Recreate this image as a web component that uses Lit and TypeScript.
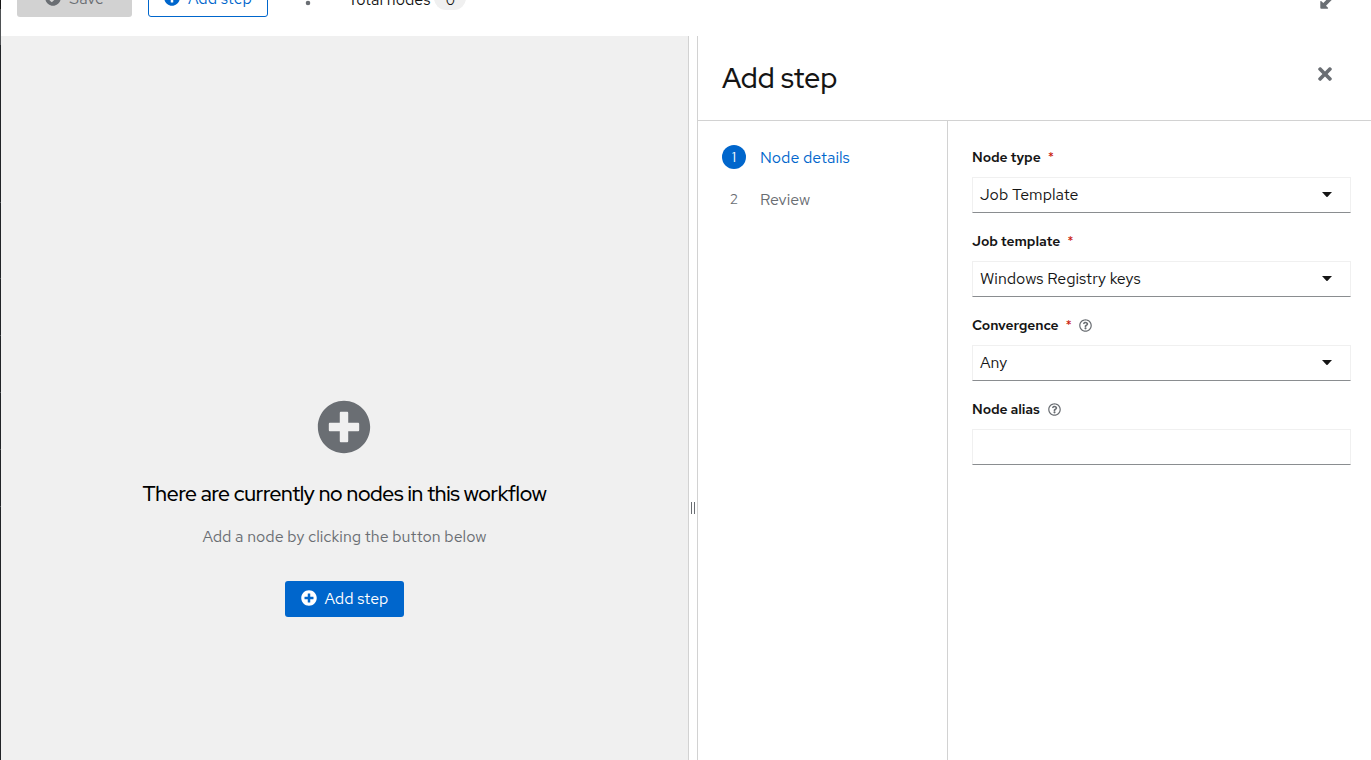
import { LitElement, html, css, svg, nothing } from "lit";
import { customElement, property } from "lit/decorators.js";

const ICONS: Record<string, { box: string; d: string }> = {
  plus: {
    box: "0 0 512 512",
    d: "M256 8C119 8 8 119 8 256s111 248 248 248 248-111 248-248S393 8 256 8zm144 276c0 6.600-5.400 12-12 12h-92v92c0 6.600-5.400 12-12 12h-56c-6.600 0-12-5.400-12-12v-92h-92c-6.600 0-12-5.400-12-12v-56c0-6.600 5.400-12 12-12h92v-92c0-6.600 5.400-12 12-12h56c6.600 0 12 5.400 12 12v92h92c6.600 0 12 5.400 12 12v56z",
  },
  check: {
    box: "0 0 512 512",
    d: "M504 256c0 136.967-111.033 248-248 248S8 392.967 8 256 119.033 8 256 8s248 111.033 248 248zM227.314 387.314l184-184c6.248-6.248 6.248-16.379 0-22.627l-22.627-22.627c-6.248-6.249-16.379-6.249-22.628 0L216 308.118l-70.059-70.059c-6.248-6.248-16.379-6.248-22.628 0l-22.627 22.627c-6.248 6.248-6.248 16.379 0 22.627l104 104c6.249 6.249 16.379 6.249 22.628.001z",
  },
  help: {
    box: "0 0 512 512",
    d: "M256 8C119.043 8 8 119.083 8 256c0 136.997 111.043 248 248 248s248-111.003 248-248C504 119.083 392.957 8 256 8zm0 448c-110.532 0-200-89.431-200-200 0-110.495 89.472-200 200-200 110.491 0 200 89.471 200 200 0 110.53-89.431 200-200 200zm107.244-255.2c0 67.052-72.421 68.084-72.421 92.863V300c0 6.627-5.373 12-12 12h-45.647c-6.627 0-12-5.373-12-12v-8.659c0-35.745 27.1-50.034 47.579-61.516 17.561-9.845 28.324-16.541 28.324-29.579 0-17.246-21.999-28.693-39.784-28.693-23.189 0-33.894 10.977-48.942 29.969-4.057 5.12-11.46 6.071-16.666 2.124l-27.824-21.098c-5.107-3.872-6.251-11.066-2.644-16.363C184.846 131.491 214.94 112 261.794 112c49.071 0 101.45 38.304 101.45 88.8zM298 368c0 23.159-18.841 42-42 42s-42-18.841-42-42 18.841-42 42-42 42 18.841 42 42z",
  },
  times: {
    box: "0 0 352 512",
    d: "M242.72 256l100.07-100.07c12.28-12.28 12.28-32.19 0-44.48l-22.24-22.24c-12.28-12.28-32.19-12.28-44.48 0L176 189.28 75.93 89.21c-12.28-12.28-32.19-12.28-44.48 0L9.21 111.45c-12.28 12.28-12.28 32.19 0 44.48L109.28 256 9.21 356.07c-12.28 12.28-12.28 32.19 0 44.48l22.24 22.24c12.28 12.28 32.2 12.28 44.48 0L176 322.72l100.07 100.07c12.28 12.28 32.2 12.28 44.48 0l22.24-22.24c12.28-12.28 12.28-32.19 0-44.48L242.72 256z",
  },
  caret: { box: "0 0 10 5", d: "M0 0h10L5.600 4.700q-.6.500-1.200 0z" },
  kebab: {
    box: "0 0 6 20",
    d: "M3 .7a2.300 2.300 0 1 1 0 4.600 2.300 2.300 0 0 1 0-4.600zm0 7a2.300 2.300 0 1 1 0 4.600 2.300 2.300 0 0 1 0-4.600zm0 7a2.300 2.300 0 1 1 0 4.600 2.300 2.300 0 0 1 0-4.600z",
  },
  expand: {
    box: "0 0 18 18",
    d: "M.3 10.500q0-.8.8-.5L3.300 12 12 3.300 9.800 1.100Q9.500.3 10.300.3h6.600q.8 0 .8.800v6.600q0 .8-.8.500L14.700 6 6 14.700l2 2q.4.900-.5 1H1.200q-.9 0-.9-.9z",
  },
};

const icon = (name: string, cls = "") =>
  html`<svg class="icon ${name} ${cls}" viewBox=${ICONS[name].box} aria-hidden="true">
    ${svg`<path d=${ICONS[name].d}></path>`}
  </svg>`;

const base = css`
  * {
    box-sizing: border-box;
  }
  .icon {
    display: block;
    flex: none;
    fill: currentColor;
  }
`;

@customElement("form-field")
export class FormField extends LitElement {
  @property() label = "";
  @property() value = "";
  @property({ type: Boolean }) required = false;
  @property({ type: Boolean }) help = false;
  @property({ type: Boolean }) select = false;

  static styles = [
    base,
    css`
      :host {
        display: block;
      }
      .label {
        display: flex;
        align-items: center;
        height: 24px;
        margin-bottom: 8px;
        font-size: 14px;
        font-weight: 600;
        letter-spacing: -0.1px;
        color: #151515;
      }
      .star {
        margin: 0 -1px 0 7px;
        color: #c9190b;
        font-weight: 400;
      }
      .help {
        width: 13px;
        height: 13px;
        margin-left: 8px;
        color: #6a6e73;
      }
      .control {
        display: flex;
        align-items: center;
        justify-content: space-between;
        height: 36px;
        padding: 0 18px 0 7px;
        border: 1px solid #f0f0f0;
        border-bottom-color: #8a8d90;
        background: #fff;
        font-size: 16px;
        color: #151515;
      }
      .caret {
        width: 10px;
        height: 5px;
        margin-bottom: 1px;
      }
    `,
  ];

  render() {
    return html`
      <div class="label">
        <span>${this.label}</span>
        ${this.required ? html`<span class="star">*</span>` : nothing}
        ${this.help ? icon("help") : nothing}
      </div>
      <div class="control">
        <span>${this.value}</span>
        ${this.select ? icon("caret") : nothing}
      </div>
    `;
  }
}

@customElement("app-root")
export class AppRoot extends LitElement {
  static styles = [
    base,
    css`
      :host {
        display: flex;
        height: 760px;
        overflow: hidden;
        background: #fff;
        color: #151515;
        font: 400 16px/24px "Red Hat Text", Lato, sans-serif;
      }
      .rail {
        flex: none;
        width: 1px;
        background: repeating-linear-gradient(transparent 0 56px, #4f5255 56px 57px) 0 279px / 1px 228px
            no-repeat,
          linear-gradient(
            #151515 9px,
            #4f5255 9px 45px,
            #212427 45px 202px,
            #4f5255 202px 203px,
            #212427 203px 278px,
            #4f5255 278px 279px,
            #212427 279px
          );
      }
      .page {
        flex: 1;
        display: flex;
        flex-direction: column;
        min-width: 0;
      }
      .toolbar {
        flex: none;
        display: flex;
        align-items: flex-end;
        height: 36px;
        padding: 0 36px 19px 16px;
      }
      .btn {
        display: flex;
        align-items: center;
        justify-content: center;
        gap: 8px;
        height: 36px;
        border-radius: 3px;
      }
      .btn .icon {
        width: 16px;
        height: 16px;
        margin-bottom: 2px;
      }
      .save {
        width: 115px;
        background: #d2d2d2;
        color: #6a6e73;
      }
      .outline {
        width: 120px;
        margin-left: 16px;
        border: 1px solid #06c;
        color: #06c;
      }
      .primary {
        width: 119px;
        background: #06c;
        color: #fff;
      }
      .kebab {
        width: 6px;
        height: 20px;
        margin: 0 0 11px 37px;
        color: #6a6e73;
      }
      .total {
        margin: 0 0 5px 37px;
      }
      .badge {
        width: 32px;
        height: 24px;
        margin: 0 0 7px 4px;
        border-radius: 12px;
        background: #f0f0f0;
        text-align: center;
        font-size: 14px;
        line-height: 28px;
      }
      .expand {
        width: 18px;
        height: 18px;
        margin: 0 -3px 8px auto;
        color: #6a6e73;
      }
      .body {
        flex: 1;
        display: flex;
        min-height: 0;
      }
      .canvas {
        width: 687px;
        display: flex;
        flex-direction: column;
        align-items: center;
        padding-top: 364px;
        background: #f0f0f0;
      }
      .big {
        width: 54px;
        height: 54px;
        margin-right: 1px;
        color: #6a6e73;
      }
      .empty-title {
        margin: 24px 0 0;
        font: 500 21px/32px "Red Hat Display", Lato, sans-serif;
        letter-spacing: -0.3px;
        color: #000;
        white-space: nowrap;
      }
      .empty-text {
        margin: 15px 0 32px;
        color: #6a6e73;
        white-space: nowrap;
      }
      .splitter {
        width: 10px;
        display: flex;
        justify-content: center;
        gap: 2px;
        padding-top: 466px;
        border: 1px solid #d2d2d2;
        border-width: 0 1px;
      }
      .grip {
        width: 1px;
        height: 12px;
        background: #6a6e73;
      }
      .panel {
        flex: 1;
        display: flex;
        flex-direction: column;
      }
      .head {
        flex: none;
        display: flex;
        justify-content: space-between;
        height: 85px;
        padding: 24px 39px 0 24px;
        border-bottom: 1px solid #d2d2d2;
      }
      .title {
        margin: 0;
        font: 500 28px/36px "Red Hat Display", Lato, sans-serif;
        letter-spacing: 0.25px;
      }
      .times {
        width: 14px;
        height: 20px;
        margin-top: 4px;
        color: #6a6e73;
      }
      .wizard {
        flex: 1;
        display: flex;
      }
      .steps {
        width: 250px;
        padding: 24px;
        border-right: 1px solid #d2d2d2;
      }
      .step {
        display: flex;
        align-items: center;
        gap: 14px;
        height: 24px;
        margin-bottom: 18px;
        color: #6a6e73;
      }
      .name {
        padding-top: 2px;
      }
      .num {
        width: 24px;
        height: 24px;
        border-radius: 50%;
        text-align: center;
        font-size: 14px;
      }
      .current {
        color: #06c;
      }
      .current .num {
        background: #06c;
        color: #fff;
      }
      .form {
        flex: 1;
        display: flex;
        flex-direction: column;
        gap: 16px;
        padding: 24px 20px 0 24px;
      }
    `,
  ];

  render() {
    return html`
      <div class="rail"></div>
      <div class="page">
        <div class="toolbar">
          <div class="btn save">${icon("check")}<span>Save</span></div>
          <div class="btn outline">${icon("plus")}<span>Add step</span></div>
          ${icon("kebab")}
          <span class="total">Total nodes</span>
          <span class="badge">0</span>
          ${icon("expand")}
        </div>
        <div class="body">
          <div class="canvas">
            ${icon("plus", "big")}
            <h2 class="empty-title">There are currently no nodes in this workflow</h2>
            <p class="empty-text">Add a node by clicking the button below</p>
            <div class="btn primary">${icon("plus")}<span>Add step</span></div>
          </div>
          <div class="splitter"><i class="grip"></i><i class="grip"></i></div>
          <div class="panel">
            <div class="head">
              <h1 class="title">Add step</h1>
              ${icon("times")}
            </div>
            <div class="wizard">
              <div class="steps">
                <div class="step current"><span class="num">1</span><span class="name">Node details</span></div>
                <div class="step"><span class="num">2</span><span class="name">Review</span></div>
              </div>
              <div class="form">
                <form-field label="Node type" value="Job Template" required select></form-field>
                <form-field label="Job template" value="Windows Registry keys" required select></form-field>
                <form-field label="Convergence" value="Any" required help select></form-field>
                <form-field label="Node alias" help></form-field>
              </div>
            </div>
          </div>
        </div>
      </div>
    `;
  }
}
